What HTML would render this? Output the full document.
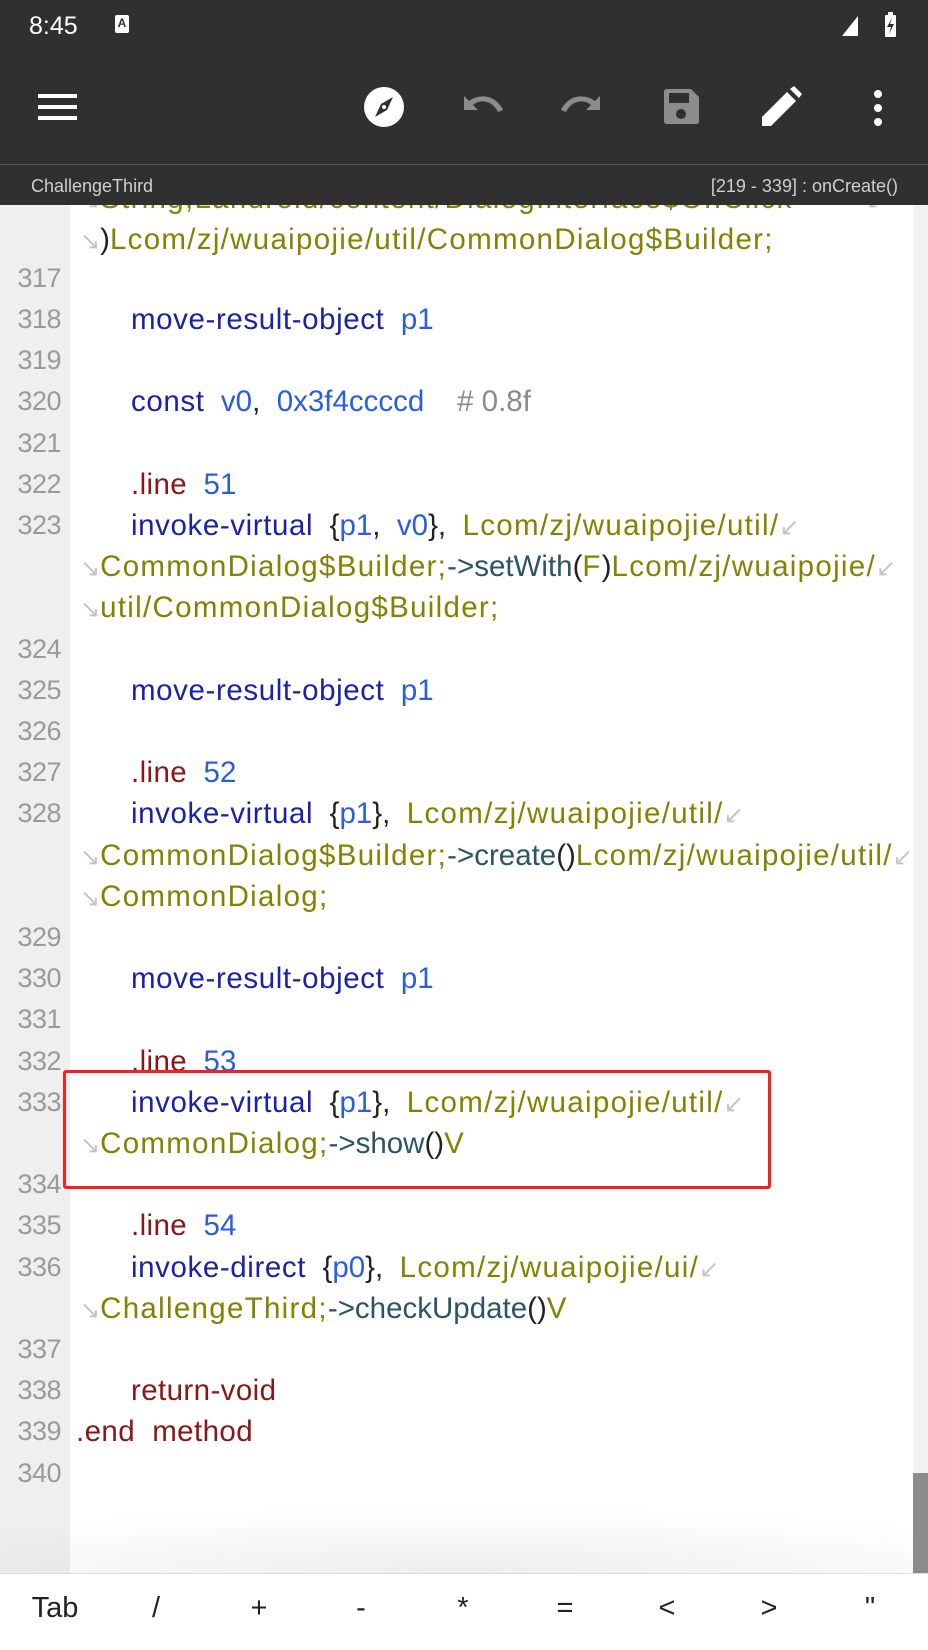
<!DOCTYPE html>
<html><head><meta charset="utf-8"><style>
*{margin:0;padding:0;box-sizing:border-box}
body{width:928px;height:1650px;overflow:hidden;background:#fff;font-family:"Liberation Sans",sans-serif;position:relative}
.dark{position:absolute;left:0;top:0;width:928px;height:205px;background:#303030}
.div{position:absolute;left:0;top:164px;width:928px;height:1px;background:#5a5a5a}
.st{position:absolute;color:#fff;font-size:25px;top:12px;left:29px}
.sub{position:absolute;top:176px;color:#cfcfcf;font-size:18px}
.gut{position:absolute;left:0;top:205px;width:70px;height:1368px;background:#efefef}
.code{position:absolute;left:0;top:205px;width:928px;height:1368px;overflow:hidden}
.ln{position:absolute;left:0;width:61px;text-align:right;color:#9a9a9a;font-size:27px;height:41px;line-height:41px;letter-spacing:-0.5px}
.tx{position:absolute;white-space:pre;font-size:29.5px;height:41px;line-height:41px}
.k{color:#1a22a8;letter-spacing:0.6px}.r{color:#2a5ee0}.c{color:#848200;letter-spacing:1.3px}.d{color:#8a1717;letter-spacing:0.4px}.m{color:#2b5566}.g{color:#8a8a8a}.b{color:#222}
.w{color:#c4c4c4;font-size:24px;letter-spacing:0}
.box{position:absolute;left:63px;top:1070px;width:708px;height:119px;border:3px solid #f0241c;border-radius:3px}
.sb{position:absolute;left:913px;top:205px;width:15px;height:1368px;background:#f2f2f2}
.sbt{position:absolute;left:913px;top:1473px;width:15px;height:100px;background:#8c8c8c}
.bot{position:absolute;left:0;top:1573px;width:928px;height:77px;background:#fff;border-top:1px solid #ddd}
.key{position:absolute;top:1592px;font-size:29px;color:#222;transform:translateX(-50%)}
.shade{position:absolute;left:0;top:1505px;width:913px;height:68px;background:radial-gradient(ellipse 70% 100% at 50% 100%,rgba(0,0,0,0.07),rgba(0,0,0,0))}
</style></head><body>
<div class="dark"></div><div class="div"></div>
<div class="st">8:45</div>
<div style="position:absolute;left:115px;top:15px;width:14px;height:18px;background:#fff;border-radius:2px;color:#303030;font-size:12px;font-weight:bold;text-align:center;line-height:16px">A</div>
<svg style="position:absolute;left:840px;top:12px" width="60" height="26"><polygon points="2,24 18,4 18,24" fill="#fff"/><rect x="45" y="3" width="11" height="22" rx="1" fill="#fff"/><rect x="48" y="0" width="5" height="4" fill="#fff"/><path d="M52 6 L47 15 L51 15 L49 22 L54 12 L50 12Z" fill="#303030"/></svg>
<svg style="position:absolute;left:38px;top:91px" width="40" height="32"><rect x="0" y="3" width="39" height="4" fill="#fff"/><rect x="0" y="14" width="39" height="4" fill="#fff"/><rect x="0" y="25" width="39" height="4" fill="#fff"/></svg>
<svg style="position:absolute;left:363px;top:86px" width="42" height="42" viewBox="0 0 42 42"><circle cx="21" cy="21" r="20" fill="#fff"/><path d="M30 11 L24 24 L12 31 L18 18Z" fill="#303030"/><circle cx="21" cy="21" r="2" fill="#fff"/></svg>
<svg style="position:absolute;left:460px;top:92px" width="46" height="30" viewBox="0 0 46 30"><path d="M4 4 V18 H18 L13 13 C20 7 32 8 38 20 L43 18 C36 3 20 1 9 9Z" fill="#8c8c8c"/></svg>
<svg style="position:absolute;left:558px;top:92px" width="46" height="30" viewBox="0 0 46 30"><path d="M42 4 V18 H28 L33 13 C26 7 14 8 8 20 L3 18 C10 3 26 1 37 9Z" fill="#8c8c8c"/></svg>
<svg style="position:absolute;left:661px;top:87px" width="40" height="40" viewBox="0 0 40 40"><path d="M3 5 Q3 2 6 2 H30 L38 10 V34 Q38 37 35 37 H6 Q3 37 3 34Z" fill="#8c8c8c"/><rect x="8" y="6" width="20" height="10" fill="#303030"/><circle cx="20" cy="27" r="5" fill="#303030"/></svg>
<svg style="position:absolute;left:760px;top:86px" width="42" height="42" viewBox="0 0 42 42"><path d="M2 40 L2 31 L27 6 L36 15 L11 40Z" fill="#fff"/><path d="M30 3 L34 0 L42 8 L39 12Z" fill="#fff"/></svg>
<svg style="position:absolute;left:872px;top:89px" width="12" height="38"><circle cx="6" cy="5" r="4" fill="#fff"/><circle cx="6" cy="19" r="4" fill="#fff"/><circle cx="6" cy="33" r="4" fill="#fff"/></svg>
<div class="sub" style="left:31px">ChallengeThird</div>
<div class="sub" style="right:30px">[219 - 339] : onCreate()</div>

<div class="gut"></div>
<div class="sb"></div><div class="sbt"></div>
<div class="shade"></div>
<div class="code">
<div class="tx" style="left:80px;top:-27px"><span class="w">↘</span><span class="c">String;Landroid/content/DialogInterface$OnClick</span></div>
<div class="tx" style="left:80px;top:14px"><span class="w">↘</span><span class="b">)</span><span class="c">Lcom/zj/wuaipojie/util/CommonDialog$Builder;</span></div>
<div class="tx" style="left:866px;top:-27px"><span class="w">↙</span></div>
</div>
<div style="position:absolute;left:0;top:0">
<div class="ln" style="top:258px">317</div>
<div class="ln" style="top:299px">318</div><div class="tx" style="left:131px;top:299px"><span class="k">move-result-object</span>  <span class="r">p1</span></div>
<div class="ln" style="top:340px">319</div>
<div class="ln" style="top:381px">320</div><div class="tx" style="left:131px;top:381px"><span class="k">const</span>  <span class="r">v0</span><span class="b">,</span>  <span class="r">0x3f4ccccd</span>    <span class="g"># 0.8f</span></div>
<div class="ln" style="top:423px">321</div>
<div class="ln" style="top:464px">322</div><div class="tx" style="left:131px;top:464px"><span class="d">.line</span>  <span class="r">51</span></div>
<div class="ln" style="top:505px">323</div><div class="tx" style="left:131px;top:505px"><span class="k">invoke-virtual</span>  <span class="b">{</span><span class="r">p1</span><span class="b">,</span>  <span class="r">v0</span><span class="b">},</span>  <span class="c">Lcom/zj/wuaipojie/util/</span><span class="w">↙</span></div>
<div class="tx" style="left:80px;top:546px"><span class="w">↘</span><span class="c">CommonDialog$Builder;</span><span class="m">-&gt;setWith</span><span class="b">(</span><span class="c">F</span><span class="b">)</span><span class="c">Lcom/zj/wuaipojie/</span><span class="w">↙</span></div>
<div class="tx" style="left:80px;top:587px"><span class="w">↘</span><span class="c">util/CommonDialog$Builder;</span></div>
<div class="ln" style="top:629px">324</div>
<div class="ln" style="top:670px">325</div><div class="tx" style="left:131px;top:670px"><span class="k">move-result-object</span>  <span class="r">p1</span></div>
<div class="ln" style="top:711px">326</div>
<div class="ln" style="top:752px">327</div><div class="tx" style="left:131px;top:752px"><span class="d">.line</span>  <span class="r">52</span></div>
<div class="ln" style="top:793px">328</div><div class="tx" style="left:131px;top:793px"><span class="k">invoke-virtual</span>  <span class="b">{</span><span class="r">p1</span><span class="b">},</span>  <span class="c">Lcom/zj/wuaipojie/util/</span><span class="w">↙</span></div>
<div class="tx" style="left:80px;top:835px"><span class="w">↘</span><span class="c">CommonDialog$Builder;</span><span class="m">-&gt;create</span><span class="b">()</span><span class="c">Lcom/zj/wuaipojie/util/</span><span class="w">↙</span></div>
<div class="tx" style="left:80px;top:876px"><span class="w">↘</span><span class="c">CommonDialog;</span></div>
<div class="ln" style="top:917px">329</div>
<div class="ln" style="top:958px">330</div><div class="tx" style="left:131px;top:958px"><span class="k">move-result-object</span>  <span class="r">p1</span></div>
<div class="ln" style="top:999px">331</div>
<div class="ln" style="top:1041px">332</div><div class="tx" style="left:131px;top:1041px"><span class="d">.line</span>  <span class="r">53</span></div>
<div class="ln" style="top:1082px">333</div><div class="tx" style="left:131px;top:1082px"><span class="k">invoke-virtual</span>  <span class="b">{</span><span class="r">p1</span><span class="b">},</span>  <span class="c">Lcom/zj/wuaipojie/util/</span><span class="w">↙</span></div>
<div class="tx" style="left:80px;top:1123px"><span class="w">↘</span><span class="c">CommonDialog;</span><span class="m">-&gt;show</span><span class="b">()</span><span class="c">V</span></div>
<div class="ln" style="top:1164px">334</div>
<div class="ln" style="top:1205px">335</div><div class="tx" style="left:131px;top:1205px"><span class="d">.line</span>  <span class="r">54</span></div>
<div class="ln" style="top:1247px">336</div><div class="tx" style="left:131px;top:1247px"><span class="k">invoke-direct</span>  <span class="b">{</span><span class="r">p0</span><span class="b">},</span>  <span class="c">Lcom/zj/wuaipojie/ui/</span><span class="w">↙</span></div>
<div class="tx" style="left:80px;top:1288px"><span class="w">↘</span><span class="c">ChallengeThird;</span><span class="m">-&gt;checkUpdate</span><span class="b">()</span><span class="c">V</span></div>
<div class="ln" style="top:1329px">337</div>
<div class="ln" style="top:1370px">338</div><div class="tx" style="left:131px;top:1370px"><span class="d">return-void</span></div>
<div class="ln" style="top:1411px">339</div><div class="tx" style="left:76px;top:1411px"><span class="d">.end  method</span></div>
<div class="ln" style="top:1453px">340</div>
</div>
<div class="box"></div>
<div class="bot"></div>
<div class="key" style="left:55px">Tab</div>
<div class="key" style="left:156px">/</div>
<div class="key" style="left:259px">+</div>
<div class="key" style="left:361px">-</div>
<div class="key" style="left:463px">*</div>
<div class="key" style="left:565px">=</div>
<div class="key" style="left:667px">&lt;</div>
<div class="key" style="left:769px">&gt;</div>
<div class="key" style="left:870px">"</div>
</body></html>
